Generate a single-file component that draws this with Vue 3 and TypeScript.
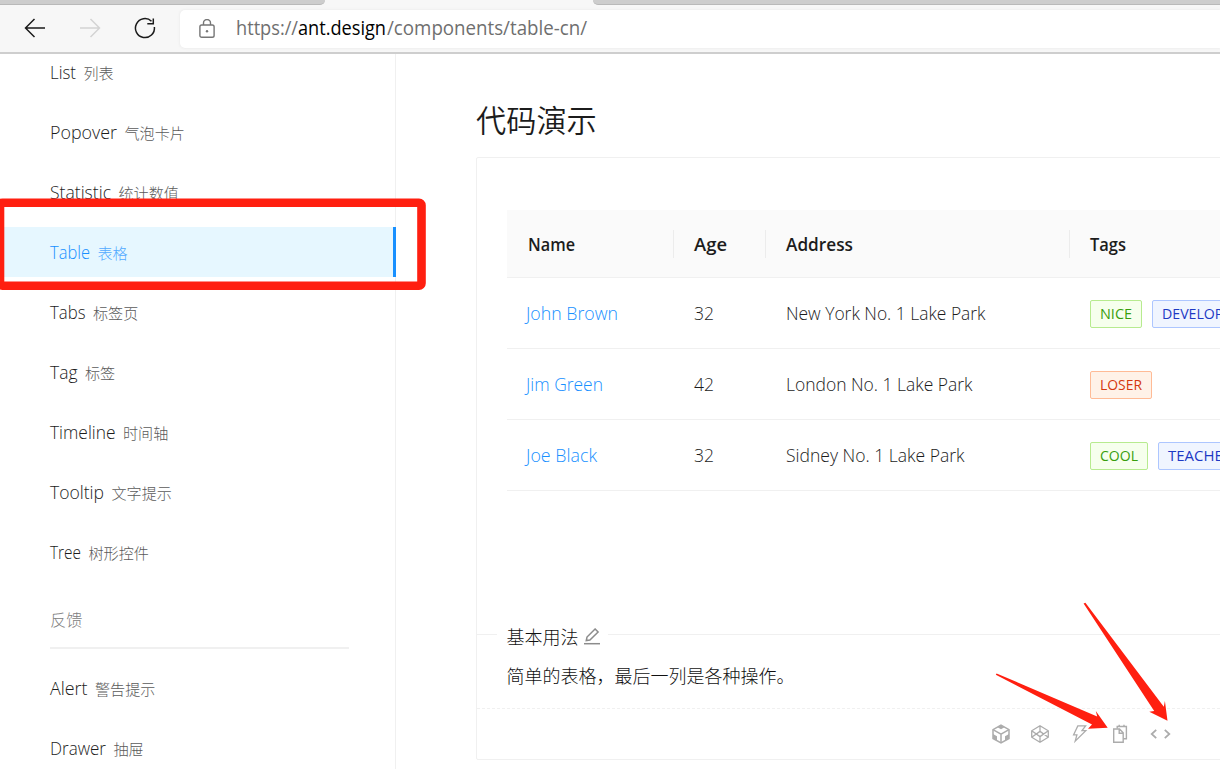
<script setup lang="ts">
interface NavItem {
  name: string
  label: string
  width: number
  active?: boolean
}
interface Tag {
  text: string
  tone: 'green' | 'blue' | 'orange'
  width: number
}
interface Row {
  name: string
  nameWidth: number
  age: number
  address: string
  addressWidth: number
  tags: Tag[]
}

const components: NavItem[] = [
  { name: 'List', label: '列表', width: 26 },
  { name: 'Popover', label: '气泡卡片', width: 67 },
  { name: 'Statistic', label: '统计数值', width: 61 },
  { name: 'Table', label: '表格', width: 40, active: true },
  { name: 'Tabs', label: '标签页', width: 35.5 },
  { name: 'Tag', label: '标签', width: 27.5 },
  { name: 'Timeline', label: '时间轴', width: 65.5 },
  { name: 'Tooltip', label: '文字提示', width: 54 },
  { name: 'Tree', label: '树形控件', width: 31 },
]
const feedback: NavItem[] = [
  { name: 'Alert', label: '警告提示', width: 37.5 },
  { name: 'Drawer', label: '抽屉', width: 56 },
]
const rows: Row[] = [
  {
    name: 'John Brown', nameWidth: 92, age: 32, address: 'New York No. 1 Lake Park', addressWidth: 199.5,
    tags: [{ text: 'NICE', tone: 'green', width: 32 }, { text: 'DEVELOPER', tone: 'blue', width: 78 }],
  },
  {
    name: 'Jim Green', nameWidth: 77, age: 42, address: 'London No. 1 Lake Park', addressWidth: 186.5,
    tags: [{ text: 'LOSER', tone: 'orange', width: 42 }],
  },
  {
    name: 'Joe Black', nameWidth: 71, age: 32, address: 'Sidney No. 1 Lake Park', addressWidth: 178.5,
    tags: [{ text: 'COOL', tone: 'green', width: 38 }, { text: 'TEACHER', tone: 'blue', width: 64 }],
  },
]
</script>

<template>
  <div class="window">
    <header class="chrome">
      <div class="tabs"><div class="tab tab-left"></div><div class="tab tab-right"></div></div>
      <div class="toolbar">
        <svg class="nav-icons" width="180" height="48" viewBox="0 0 180 48" fill="none">
          <path d="M45 23H26M34.500 14l-9 9 9 9" stroke="#1b1b1b" stroke-width="1.500" />
          <path d="M80 23h19M90.500 14l9 9-9 9" stroke="#d3d3d3" stroke-width="1.500" />
          <path d="M151.500 16.200A9.500 9.500 0 1 0 154.400 22" stroke="#1b1b1b" stroke-width="1.500" />
          <path d="M153.300 13.500v5.300h-6" stroke="#1b1b1b" stroke-width="1.500" />
        </svg>
        <div class="address">
          <svg width="16" height="20" viewBox="0 0 16 20" fill="none" stroke="#767676" stroke-width="1.400">
            <rect x=".9" y="6" width="14.200" height="12.300" rx="1.800" />
            <path d="M4.500 6V4a3.500 3.500 0 0 1 7 0v2" />
            <circle cx="8" cy="12.300" r="1.200" fill="#767676" stroke="none" />
          </svg>
          <svg class="url" width="360" height="32">
            <text x="0" y="22" textLength="62" lengthAdjust="spacingAndGlyphs">https://</text>
            <text class="host" x="62" y="22" textLength="88" lengthAdjust="spacingAndGlyphs">ant.design</text>
            <text x="151" y="22" textLength="200" lengthAdjust="spacingAndGlyphs">/components/table-cn/</text>
          </svg>
        </div>
      </div>
    </header>

    <div class="page">
      <aside class="sidebar">
        <div v-for="item in components" :key="item.name" class="item" :class="{ active: item.active }">
          <svg class="label" :width="item.width" height="26">
            <text x="0" y="20" :textLength="item.width" lengthAdjust="spacingAndGlyphs">{{ item.name }}</text>
          </svg>
          <span class="cn">{{ item.label }}</span>
        </div>
        <div class="group">反馈</div>
        <div v-for="item in feedback" :key="item.name" class="item">
          <svg class="label" :width="item.width" height="26">
            <text x="0" y="20" :textLength="item.width" lengthAdjust="spacingAndGlyphs">{{ item.name }}</text>
          </svg>
          <span class="cn">{{ item.label }}</span>
        </div>
      </aside>

      <main class="content">
        <h2>代码演示</h2>
        <section class="card">
          <div class="table">
            <div class="row head">
              <div class="cell"><svg class="label" width="48" height="26"><text x="1" y="20" textLength="47" lengthAdjust="spacingAndGlyphs">Name</text></svg></div>
              <div class="cell"><svg class="label" width="33" height="26"><text x="0" y="20" textLength="33" lengthAdjust="spacingAndGlyphs">Age</text></svg></div>
              <div class="cell"><svg class="label" width="68" height="26"><text x="0" y="20" textLength="67" lengthAdjust="spacingAndGlyphs">Address</text></svg></div>
              <div class="cell"><svg class="label" width="37" height="26"><text x="0" y="20" textLength="36" lengthAdjust="spacingAndGlyphs">Tags</text></svg></div>
            </div>
            <div v-for="row in rows" :key="row.name" class="row">
              <div class="cell link"><svg class="label" :width="row.nameWidth" height="26"><text x="0" y="20" :textLength="row.nameWidth" lengthAdjust="spacingAndGlyphs">{{ row.name }}</text></svg></div>
              <div class="cell"><svg class="label" width="20" height="26"><text x="0" y="20" textLength="20" lengthAdjust="spacingAndGlyphs">{{ row.age }}</text></svg></div>
              <div class="cell"><svg class="label" :width="row.addressWidth" height="26"><text x="0" y="20" :textLength="row.addressWidth" lengthAdjust="spacingAndGlyphs">{{ row.address }}</text></svg></div>
              <div class="cell tags">
                <span v-for="tag in row.tags" :key="tag.text" class="tag" :class="tag.tone">
                  <svg class="label" :width="tag.width" height="26"><text x="0" y="18" :textLength="tag.width" lengthAdjust="spacingAndGlyphs">{{ tag.text }}</text></svg>
                </span>
              </div>
            </div>
          </div>

          <div class="meta">
            <div class="title">
              <span>基本用法</span>
              <svg width="18" height="18" viewBox="0 0 18 18" fill="none" stroke="#8c8c8c" stroke-width="1.500">
                <path d="M3.300 12.500l.7-3.500 8.100-8 3 3-8.200 8z" /><path d="M1 15.700h16" />
              </svg>
            </div>
            <p>简单的表格，最后一列是各种操作。</p>
          </div>

          <div class="actions">
            <svg width="20" height="20" viewBox="0 0 20 20" fill="none" stroke="#acacac" stroke-width="1.500">
              <path d="M10 1.200l8 4.400v8.900l-8 4.400-8-4.400V5.600z" />
              <path d="M2 5.600l8 4.500 8-4.500M10 10v9" />
              <path d="M6.500 3.300L10 1.200l3.500 2.100L10 5.200zM2 10l4 2.300v4.500l-4-2.300zM18 10l-4 2.300v4.500l4-2.300z" fill="#acacac" stroke="none" />
            </svg>
            <svg width="20" height="20" viewBox="0 0 20 20" fill="none" stroke="#acacac" stroke-width="1.300">
              <path d="M10 1.800l8.300 5v6.400l-8.300 5-8.300-5V6.800zM1.700 6.800L10 12.600l8.300-5.800M1.700 13.200L10 7.400l8.300 5.800M10 1.800v5.600M10 12.600v5.600" />
            </svg>
            <svg width="20" height="20" viewBox="0 0 20 20" fill="none" stroke="#acacac" stroke-width="1.300">
              <path d="M7.800 1.900h7.800l-3.600 4.700h3.800L5.200 17.200 6.900 10.800H3.600z" />
            </svg>
            <svg width="20" height="20" viewBox="0 0 20 20" fill="none" stroke="#acacac" stroke-width="1.400">
              <path d="M3.700 5h5.800l3.700 3.800v9.400H3.700zM9.200 5v4.200h4" />
              <path d="M7.200 4.500V2.500h9.200v12.300h-3M9.200.8v2.400M14 .8v2.400" />
            </svg>
            <svg width="22" height="20" viewBox="0 0 22 20" fill="none" stroke="#acacac" stroke-width="1.800">
              <path d="M7.200 5.800L2.700 10l4.500 4.200M15.800 5.800l4.500 4.200-4.500 4.200" />
            </svg>
          </div>
        </section>
      </main>
    </div>

    <svg class="marks" width="1220" height="769" viewBox="0 0 1220 769">
      <rect x="0" y="202.700" width="421.500" height="83" rx="2.500" fill="none" stroke="#ff1f10" stroke-width="8.600" />
      <path d="M1083.600 603.500L1085.400 602.800 1163.800 706.800 1164.900 701 1167.500 720.700 1149.300 711.800 1154.200 710.900z" fill="#ff1f10" />
      <path d="M995.800 674.800L996.600 673.400 1097.200 716.600 1095.800 711 1107.700 727.700 1088 728.700 1092 724.500z" fill="#ff1f10" />
    </svg>
  </div>
</template>

<style>
html, body { margin: 0; overflow: hidden; }
</style>

<style scoped>
.window {
  position: relative;
  width: 1220px;
  height: 769px;
  overflow: hidden;
  background: #fff;
  color: #1c1c1c;
  font-family: "Open Sans", "Noto Sans CJK SC", sans-serif;
  font-size: 17.5px;
  font-weight: 350;
}
.window * { box-sizing: border-box; }
svg { display: block; flex: none; }
text { fill: currentColor; }
.chrome { height: 54px; background: #f7f7f7; border-bottom: 2px solid #cecece; }
.tabs { display: flex; justify-content: space-between; height: 5px; }
.tab { background: #cdcdcd; border-bottom: 1px solid #b9b9b9; }
.tab-left { width: 325px; border-bottom-right-radius: 5px; }
.tab-right { width: 627px; border-bottom-left-radius: 5px; }
.toolbar { display: flex; height: 47px; }
.address {
  display: flex;
  align-items: center;
  flex: 1;
  height: 38px;
  margin-top: 5px;
  padding-left: 19px;
  gap: 21px;
  background: #fff;
  border-radius: 5px 0 0 5px;
  box-shadow: 0 0 3px #e4e4e4;
}
.url { overflow: visible; color: #6f6f6f; font-size: 20px; font-weight: 400; }
.url .host { fill: #000; }
.page { display: flex; height: 715px; }
.sidebar { flex: none; width: 396px; border-right: 1px solid #f0f0f0; }
.item { display: flex; align-items: center; height: 50px; margin: 0 -1px 10px 0; padding-left: 50px; }
.item:first-child { margin-top: -7px; }
.item.active { background: #e6f7ff; color: #1890ff; border-right: 3px solid #1890ff; }
.item .cn { margin: 2px 0 0 7.5px; font-size: 15.100px; font-weight: 300; line-height: 22px; opacity: .75; }
.label { overflow: visible; }
.group {
  width: 299px;
  height: 62px;
  margin: 2px 0 14px 50px;
  padding-top: 21px;
  border-bottom: 2px solid #f0f0f0;
  color: #808080;
  font-size: 16.200px;
  font-weight: 300;
  line-height: 24px;
}
.content { flex: none; width: 900px; padding: 44px 0 0 80px; }
h2 { margin: 0; height: 59px; font-size: 30.200px; line-height: 45px; font-weight: 350; }
.card { height: 603px; border: 1px solid #f0f0f0; border-radius: 2px 0 0 2px; display: flex; flex-direction: column; }
.table { margin: 52px 0 0 30px; }
.row { display: grid; grid-template-columns: 167px 92px 304px 300px; height: 71px; border-bottom: 1px solid #f0f0f0; }
.row.head { height: 68px; background: #fafafa; font-weight: 600; }
.cell { display: flex; align-items: center; padding-left: 20px; }
.head .cell:not(:last-child) {
  background: linear-gradient(#ececec, #ececec) right center / 1px 28px no-repeat;
}
.link { padding-left: 19px; color: #1890ff; }
.tags { gap: 10px; padding-top: 1px; }
.tag { height: 28px; padding: 0 9px; border: 1px solid; border-radius: 2px; font-size: 15px; font-weight: 400; }
.green { color: #389e0d; background: #f6ffed; border-color: #b7eb8f; }
.blue { color: #1d39c4; background: #f0f5ff; border-color: #adc6ff; }
.orange { color: #d4380d; background: #fff2e8; border-color: #ffbb96; }
.meta { margin-top: 143px; height: 74px; border-top: 1px solid #f0f0f0; font-weight: 300; }
.title {
  display: flex;
  align-items: center;
  width: 111px;
  height: 26px;
  margin: -11px 0 0 20px;
  padding-left: 9.5px;
  gap: 4px;
  background: #fff;
  color: #111;
  font-size: 18px;
  line-height: 26px;
}
p { margin: 13px 0 0 29.5px; color: #111; font-size: 18px; line-height: 26px; }
.actions {
  display: flex;
  align-items: center;
  flex: 1;
  padding-left: 514px;
  gap: 20px;
  border-top: 1px dashed #f0f0f0;
}
.actions svg:nth-child(1) { margin-right: -1px; }
.actions svg:last-child { margin-left: -1px; }
.marks { position: absolute; inset: 0; pointer-events: none; }
</style>
